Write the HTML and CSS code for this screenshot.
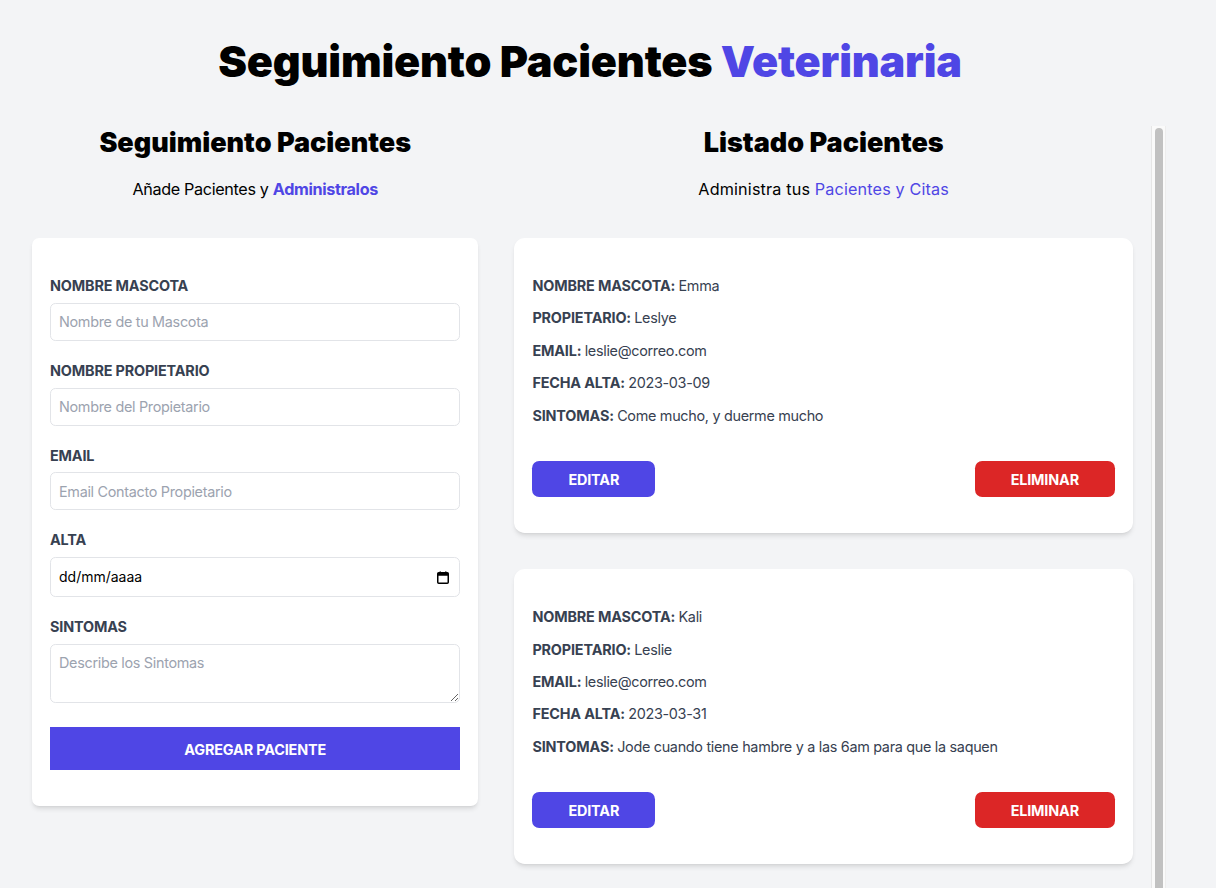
FILE: index.html
```html
<!DOCTYPE html>
<html lang="es">
<head>
<meta charset="utf-8">
<title>Seguimiento Pacientes Veterinaria</title>
<link rel="stylesheet" href="styles.css">
</head>
<body>
<div class="container">
  <h1 class="title">Seguimiento Pacientes <span class="accent">Veterinaria</span></h1>
  <div class="columns">
    <section class="form-col">
      <h2 class="section-title">Seguimiento Pacientes</h2>
      <p class="section-sub">Añade Pacientes y <span class="accent strong">Administralos</span></p>
      <form class="form-card">
        <div class="field">
          <label class="field-label" for="mascota">Nombre Mascota</label>
          <input id="mascota" class="field-input" type="text" placeholder="Nombre de tu Mascota">
        </div>
        <div class="field">
          <label class="field-label" for="propietario">Nombre Propietario</label>
          <input id="propietario" class="field-input" type="text" placeholder="Nombre del Propietario">
        </div>
        <div class="field">
          <label class="field-label" for="email">Email</label>
          <input id="email" class="field-input" type="email" placeholder="Email Contacto Propietario">
        </div>
        <div class="field">
          <label class="field-label">Alta</label>
          <div class="field-input date-input">
            <span class="date-text">dd/mm/aaaa</span>
            <svg class="cal-icon" width="12" height="13" viewBox="0 0 12 13" aria-hidden="true">
              <rect x="0.75" y="1.75" width="10.5" height="10.5" rx="1" fill="none" stroke="#000" stroke-width="1.5"/>
              <rect x="0.75" y="1.75" width="10.5" height="3" fill="#000"/>
              <rect x="2.5" y="0.5" width="1.5" height="2" fill="#000"/>
              <rect x="8" y="0.5" width="1.5" height="2" fill="#000"/>
            </svg>
          </div>
        </div>
        <div class="field field-last">
          <label class="field-label" for="sintomas">Sintomas</label>
          <textarea id="sintomas" class="field-input field-textarea" placeholder="Describe los Sintomas"></textarea>
        </div>
        <button type="button" class="submit">Agregar Paciente</button>
      </form>
    </section>

    <div class="list-wrap">
      <section class="list-col">
        <h2 class="section-title">Listado Pacientes</h2>
        <p class="section-sub section-sub-wide">Administra tus <span class="accent">Pacientes y Citas</span></p>

        <div class="patient">
          <p class="row">Nombre Mascota: <span class="val">Emma</span></p>
          <p class="row">Propietario: <span class="val">Leslye</span></p>
          <p class="row">Email: <span class="val">leslie@correo.com</span></p>
          <p class="row">Fecha Alta: <span class="val">2023-03-09</span></p>
          <p class="row">Sintomas: <span class="val">Come mucho, y duerme mucho</span></p>
          <div class="actions">
            <button type="button" class="btn btn-edit">Editar</button>
            <button type="button" class="btn btn-delete">Eliminar</button>
          </div>
        </div>

        <div class="patient">
          <p class="row">Nombre Mascota: <span class="val">Kali</span></p>
          <p class="row">Propietario: <span class="val">Leslie</span></p>
          <p class="row">Email: <span class="val">leslie@correo.com</span></p>
          <p class="row">Fecha Alta: <span class="val">2023-03-31</span></p>
          <p class="row">Sintomas: <span class="val">Jode cuando tiene hambre y a las 6am para que la saquen</span></p>
          <div class="actions">
            <button type="button" class="btn btn-edit">Editar</button>
            <button type="button" class="btn btn-delete">Eliminar</button>
          </div>
        </div>
      </section>
      <div class="scrollbar" aria-hidden="true">
        <div class="scrollbar-thumb"></div>
      </div>
    </div>
  </div>
</div>
</body>
</html>
```

FILE: styles.css
```css
* {
  box-sizing: border-box;
}

html,
body {
  margin: 0;
  height: 100%;
  overflow: hidden;
}

body {
  background: #f3f4f6;
  color: #000;
  font-family: Inter, "Noto Sans", sans-serif;
}

.container {
  width: 1152px;
  margin: 40px 0 0 14px;
}

.title {
  width: 768px;
  margin: 0 auto;
  text-align: center;
  font-weight: 900;
  font-size: 43.2px;
  line-height: 43.2px;
  letter-spacing: -0.2px;
}

.accent {
  color: #4f46e5;
}

.strong {
  font-weight: 700;
}

.columns {
  display: flex;
  margin-top: 43.2px;
}

.form-col {
  flex: none;
  width: 446.4px;
  margin: 0 18px;
}

.list-wrap {
  flex: none;
  display: flex;
  width: 669.6px;
  height: 888px;
}

.list-col {
  flex: 1;
  min-width: 0;
  overflow-y: auto;
}

.scrollbar {
  flex: none;
  width: 15px;
  background: #fafafa;
  border-left: 1px solid #e6e6e6;
  border-right: 1px solid #ededed;
  padding: 2px 2px 0 3px;
}

.scrollbar-thumb {
  width: 8px;
  height: 830px;
  border-radius: 4px;
  background: #c1c1c1;
}

.section-title {
  margin: 0;
  padding-top: 1px;
  height: 32.4px;
  text-align: center;
  font-weight: 900;
  font-size: 27px;
  line-height: 32.4px;
}

.section-sub {
  margin: 18px 0 36px;
  text-align: center;
  font-size: 16.2px;
  line-height: 25.2px;
  letter-spacing: -0.35px;
}

.section-sub-wide {
  letter-spacing: 0.15px;
}

.form-card {
  background: #fff;
  border-radius: 7.2px;
  box-shadow: 0 3.6px 5.4px -1px rgba(0, 0, 0, 0.1), 0 1.8px 3.6px -2px rgba(0, 0, 0, 0.1);
  padding: 36px 18px;
}

.field {
  margin-bottom: 18px;
}

.field-last {
  margin-bottom: 24px;
}

.field-label {
  display: block;
  padding-top: 1px;
  height: 21.6px;
  color: #374151;
  text-transform: uppercase;
  font-weight: 700;
  font-size: 14.4px;
  line-height: 21.6px;
  letter-spacing: -0.15px;
}

.field-input {
  display: block;
  width: 100%;
  height: 38px;
  margin: 7.2px 0 0;
  padding: 7.2px 8px;
  border: 1px solid #e2e4e8;
  border-radius: 5.4px;
  background: #fff;
  color: #000;
  font-family: inherit;
  font-size: 14.4px;
  line-height: 21.6px;
  letter-spacing: -0.3px;
  outline: none;
}

.field-input::placeholder {
  color: #9ca3af;
}

.date-input {
  height: 40px;
  display: flex;
  align-items: center;
  justify-content: space-between;
  padding: 0 10px 0 8px;
}

.date-text {
  font-size: 14px;
  letter-spacing: 0;
}

.cal-icon {
  display: block;
}

.field-textarea {
  height: 59px;
  resize: vertical;
}

.submit {
  display: block;
  width: 100%;
  border: 0;
  padding: 11.8px 10.8px 9.8px;
  background: #4f46e5;
  color: #fff;
  font-family: inherit;
  font-weight: 700;
  font-size: 14.4px;
  line-height: 21.6px;
  letter-spacing: -0.15px;
  text-transform: uppercase;
  cursor: pointer;
}

.patient {
  margin: 36px 18px;
  padding: 36px 18px;
  background: #fff;
  border-radius: 10.8px;
  box-shadow: 0 3.6px 5.4px -1px rgba(0, 0, 0, 0.1), 0 1.8px 3.6px -2px rgba(0, 0, 0, 0.1);
}

.row {
  margin: 0 0 10.8px;
  padding-top: 1px;
  height: 21.6px;
  color: #374151;
  font-weight: 700;
  text-transform: uppercase;
  font-size: 14.4px;
  line-height: 21.6px;
  letter-spacing: -0.15px;
}

.val {
  font-weight: 400;
  text-transform: none;
  letter-spacing: -0.3px;
}

.actions {
  display: flex;
  justify-content: space-between;
  margin-top: 36px;
}

.btn {
  border: 0;
  padding: 8.2px 36px 6.2px;
  border-radius: 7.2px;
  color: #fff;
  font-family: inherit;
  font-weight: 700;
  font-size: 14.4px;
  line-height: 21.6px;
  letter-spacing: -0.15px;
  text-transform: uppercase;
  cursor: pointer;
}

.btn-edit {
  background: #4f46e5;
}

.btn-delete {
  background: #dc2626;
}
```
